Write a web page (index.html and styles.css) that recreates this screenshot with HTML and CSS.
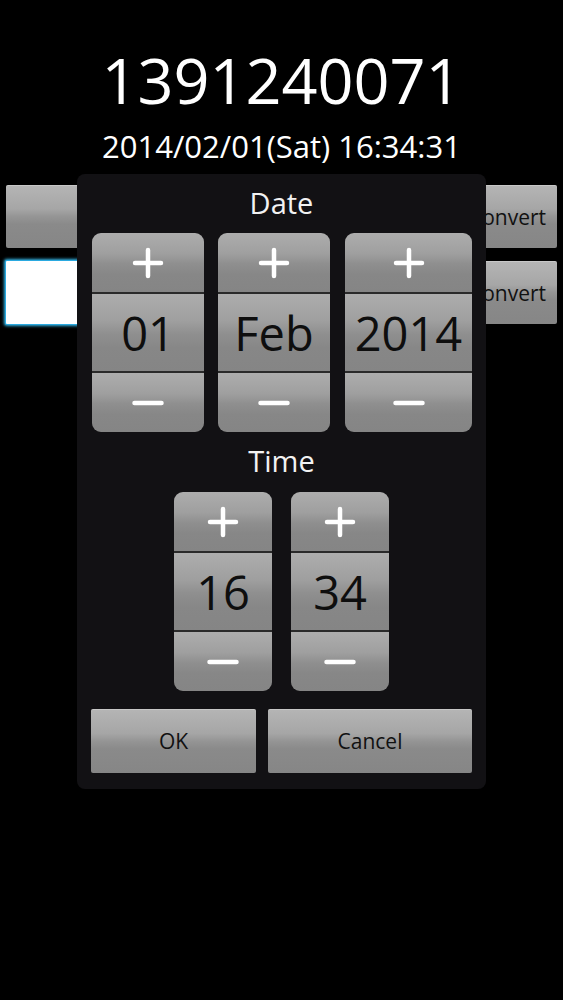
FILE: index.html
```html
<!DOCTYPE html>
<html>
<head>
<meta charset="utf-8">
<link rel="stylesheet" href="styles.css">
</head>
<body>
<div class="screen">
  <div class="epoch">1391240071</div>
  <div class="datetime">2014/02/01(Sat) 16:34:31</div>
  <div class="row">
    <div class="gbtn grow"></div>
    <div class="gbtn convert">Convert</div>
  </div>
  <div class="row">
    <div class="field grow"></div>
    <div class="gbtn convert">Convert</div>
  </div>

  <div class="dialog">
    <div class="title">Date</div>
    <div class="pickers date-row">
      <div class="picker w112">
        <div class="seg step"><svg class="ico" viewBox="0 0 32 32"><path d="M16 3V29M3 16H29"/></svg></div>
        <div class="seg val">01</div>
        <div class="seg step"><svg class="ico" viewBox="0 0 32 32"><path d="M2.5 16H29.5"/></svg></div>
      </div>
      <div class="picker w112">
        <div class="seg step"><svg class="ico" viewBox="0 0 32 32"><path d="M16 3V29M3 16H29"/></svg></div>
        <div class="seg val">Feb</div>
        <div class="seg step"><svg class="ico" viewBox="0 0 32 32"><path d="M2.5 16H29.5"/></svg></div>
      </div>
      <div class="picker w127">
        <div class="seg step"><svg class="ico" viewBox="0 0 32 32"><path d="M16 3V29M3 16H29"/></svg></div>
        <div class="seg val">2014</div>
        <div class="seg step"><svg class="ico" viewBox="0 0 32 32"><path d="M2.5 16H29.5"/></svg></div>
      </div>
    </div>
    <div class="title">Time</div>
    <div class="pickers time-row">
      <div class="picker w98">
        <div class="seg step"><svg class="ico" viewBox="0 0 32 32"><path d="M16 3V29M3 16H29"/></svg></div>
        <div class="seg val">16</div>
        <div class="seg step"><svg class="ico" viewBox="0 0 32 32"><path d="M2.5 16H29.5"/></svg></div>
      </div>
      <div class="picker w98">
        <div class="seg step"><svg class="ico" viewBox="0 0 32 32"><path d="M16 3V29M3 16H29"/></svg></div>
        <div class="seg val">34</div>
        <div class="seg step"><svg class="ico" viewBox="0 0 32 32"><path d="M2.5 16H29.5"/></svg></div>
      </div>
    </div>
    <div class="actions">
      <div class="gbtn ok">OK</div>
      <div class="gbtn cancel">Cancel</div>
    </div>
  </div>
</div>
</body>
</html>
```

FILE: styles.css
```css
html, body {
  margin: 0;
  padding: 0;
  background: #000;
}
body {
  font-family: "Open Sans", Roboto, "DejaVu Sans", sans-serif;
  color: #fff;
}
.screen {
  position: relative;
  width: 563px;
  height: 1000px;
  padding: 44px 6px 0 6px;
  box-sizing: border-box;
}
.epoch {
  font-size: 63px;
  line-height: 72px;
  text-align: center;
  color: #fff;
}
.datetime {
  margin-top: 12px;
  font-size: 31px;
  line-height: 36px;
  text-align: center;
  color: #fff;
}
.row {
  display: flex;
  gap: 6px;
  height: 63px;
  margin-top: 13px;
}
.datetime + .row {
  margin-top: 21px;
}
.grow {
  flex: 1;
}
.gbtn {
  display: flex;
  align-items: center;
  justify-content: center;
  border-radius: 2px;
  background: linear-gradient(to bottom, #b5b5b5 0%, #a6a6a6 38%, #959595 50%, #8a8a8a 62%, #868686 100%);
  color: #111;
  font-size: 21px;
  box-shadow: inset 0 1px 0 rgba(255,255,255,0.25);
}
.convert {
  width: 99px;
  flex: none;
}
.field {
  background: #fff;
  border-radius: 1px;
  box-shadow: 0 0 0 1px #2aa9e0, 0 0 3px 2px #33b5e5;
}
.dialog {
  position: absolute;
  left: 77px;
  top: 174px;
  width: 409px;
  height: 615px;
  box-sizing: border-box;
  padding: 0 14px;
  background: #121114;
  border-radius: 8px;
  display: flex;
  flex-direction: column;
}
.title {
  height: 59px;
  line-height: 57px;
  font-size: 29px;
  text-align: center;
  color: #f2f2f2;
}
.pickers {
  display: flex;
}
.date-row {
  margin-left: 1px;
  gap: 14px;
}
.date-row .picker:last-child {
  margin-left: 1px;
}
.time-row {
  justify-content: center;
  gap: 19px;
  margin-top: 1px;
}
.picker {
  display: flex;
  flex-direction: column;
  border-radius: 9px;
  overflow: hidden;
  background: #2a2a2a;
}
.w112 { width: 112px; }
.w127 { width: 127px; }
.w98 { width: 98px; }
.seg {
  display: flex;
  align-items: center;
  justify-content: center;
  background: linear-gradient(to bottom, #adadad 0%, #9f9f9f 35%, #8f8f8f 52%, #878787 70%, #858585 100%);
}
.step {
  height: 59px;
}
.val {
  height: 77px;
  margin: 2px 0;
  color: #0e0e0e;
  font-size: 47px;
  font-weight: 500;
  padding-top: 1px;
  box-sizing: border-box;
}
.ico {
  width: 32px;
  height: 32px;
  fill: none;
  stroke: #fff;
  stroke-width: 4.5;
  stroke-linecap: round;
}
.actions {
  display: flex;
  gap: 12px;
  margin-top: 18px;
  height: 64px;
}
.ok {
  width: 165px;
}
.cancel {
  flex: 1;
}
```
